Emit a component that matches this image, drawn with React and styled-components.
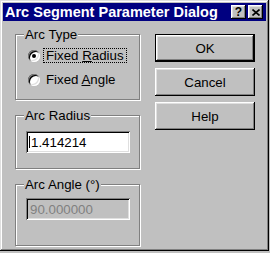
import React from 'react';
import styled, { createGlobalStyle } from 'styled-components';

const GlobalStyle = createGlobalStyle`
  html, body {
    margin: 0;
    padding: 0;
    background: #c0c0c0;
  }
  body {
    font-family: "Liberation Sans", Arial, sans-serif;
    font-size: 13.3px;
    color: #000;
  }
`;

const raised = `
  box-shadow:
    inset -1px -1px 0 #000,
    inset 1px 1px 0 #fff,
    inset -2px -2px 0 #808080,
    inset 2px 2px 0 #dfdfdf;
`;

const sunken = `
  box-shadow:
    inset 1px 1px 0 #808080,
    inset -1px -1px 0 #fff,
    inset 2px 2px 0 #000,
    inset -2px -2px 0 #dfdfdf;
`;

const Window = styled.div`
  box-sizing: border-box;
  width: 269px;
  height: 251px;
  padding: 3px;
  background: #c0c0c0;
  display: flex;
  flex-direction: column;
  box-shadow:
    inset -1px -1px 0 #000,
    inset 1px 1px 0 #dfdfdf,
    inset -2px -2px 0 #808080,
    inset 2px 2px 0 #fff;
`;

const TitleBar = styled.div`
  height: 18px;
  background: #000080;
  display: flex;
  align-items: center;
  padding: 0 3px 0 2px;
`;

const Title = styled.div`
  flex: 1;
  color: #fff;
  font-weight: bold;
  font-size: 14.5px;
  white-space: nowrap;
`;

const CaptionButton = styled.div`
  box-sizing: border-box;
  width: 15px;
  height: 14px;
  background: #c0c0c0;
  margin-left: ${p => p.$gap || 0}px;
  display: flex;
  align-items: center;
  justify-content: center;
  font-weight: bold;
  font-size: 12px;
  line-height: 1;
  ${raised}
`;

const Body = styled.div`
  flex: 1;
  display: flex;
  padding: 13px 0 0 12px;
`;

const LeftCol = styled.div`
  width: 125px;
  display: flex;
  flex-direction: column;
  gap: 15px;
`;

const RightCol = styled.div`
  width: 100px;
  margin-left: 15px;
  display: flex;
  flex-direction: column;
  gap: 6px;
`;

const Group = styled.div`
  position: relative;
  box-sizing: border-box;
  height: ${p => p.$height}px;
  border: 1px solid #808080;
  box-shadow: inset 1px 1px 0 #fff, 1px 1px 0 #fff;
  padding: ${p => p.$top}px 0 0 ${p => p.$left}px;
  display: flex;
  flex-direction: column;
  gap: ${p => p.$gap || 0}px;
`;

const GroupLabel = styled.span`
  position: absolute;
  top: -8px;
  left: 8px;
  padding: 0 1px;
  line-height: 15px;
  background: #c0c0c0;
  white-space: nowrap;
`;

const RadioRow = styled.div`
  display: flex;
  align-items: center;
  height: 15px;
  gap: 3px;
`;

const Radio = styled.span`
  position: relative;
  width: 12px;
  height: 12px;
  border-radius: 50%;
  background: #fff;
  box-shadow:
    inset 1px 1px 0 #808080,
    inset -1px -1px 0 #fff,
    inset 2px 2px 0 #000,
    inset -2px -2px 0 #dfdfdf;

  &::after {
    content: "";
    display: ${p => (p.$checked ? 'block' : 'none')};
    position: absolute;
    left: 4px;
    top: 4px;
    width: 4px;
    height: 4px;
    border-radius: 50%;
    background: #000;
  }
`;

const RadioText = styled.span`
  box-sizing: border-box;
  height: 15px;
  line-height: 13px;
  padding: 0 2px;
  border: 1px dotted ${p => (p.$focused ? '#000' : 'transparent')};
  white-space: nowrap;
`;

const Field = styled.div`
  box-sizing: border-box;
  width: 104px;
  height: 22px;
  padding-left: ${p => (p.$disabled ? 4 : 3)}px;
  display: flex;
  align-items: center;
  background: ${p => (p.$disabled ? '#c0c0c0' : '#fff')};
  color: ${p => (p.$disabled ? '#808080' : '#000')};
  ${sunken}
`;

const Caret = styled.span`
  width: 1px;
  height: 12px;
  background: #000;
  margin-right: 1px;
`;

const Button = styled.div`
  box-sizing: border-box;
  height: 28px;
  display: flex;
  align-items: center;
  justify-content: center;
  border: ${p => (p.$default ? '1px solid #000' : 'none')};
  ${raised}
`;

export default function App() {
  return (
    <>
      <GlobalStyle />
      <Window>
        <TitleBar>
          <Title>Arc Segment Parameter Dialog</Title>
          <CaptionButton>?</CaptionButton>
          <CaptionButton $gap={2}>
            <svg width="8" height="7" viewBox="0 0 8 7">
              <path d="M0.5 0.5 L7.5 6.5 M7.5 0.5 L0.5 6.5" stroke="#000" strokeWidth="1.6" />
            </svg>
          </CaptionButton>
        </TitleBar>
        <Body>
          <LeftCol>
            <Group $height={66} $top={13} $left={12} $gap={9}>
              <GroupLabel>Arc Type</GroupLabel>
              <RadioRow>
                <Radio $checked />
                <RadioText $focused>
                  Fixed <u>R</u>adius
                </RadioText>
              </RadioRow>
              <RadioRow>
                <Radio />
                <RadioText>
                  Fixed <u>A</u>ngle
                </RadioText>
              </RadioRow>
            </Group>
            <Group $height={54} $top={15} $left={10}>
              <GroupLabel>Arc Radius</GroupLabel>
              <Field>
                <Caret />
                1.414214
              </Field>
            </Group>
            <Group $height={62} $top={13} $left={10}>
              <GroupLabel>Arc Angle (°)</GroupLabel>
              <Field $disabled>90.000000</Field>
            </Group>
          </LeftCol>
          <RightCol>
            <Button $default>OK</Button>
            <Button>Cancel</Button>
            <Button>Help</Button>
          </RightCol>
        </Body>
      </Window>
    </>
  );
}
